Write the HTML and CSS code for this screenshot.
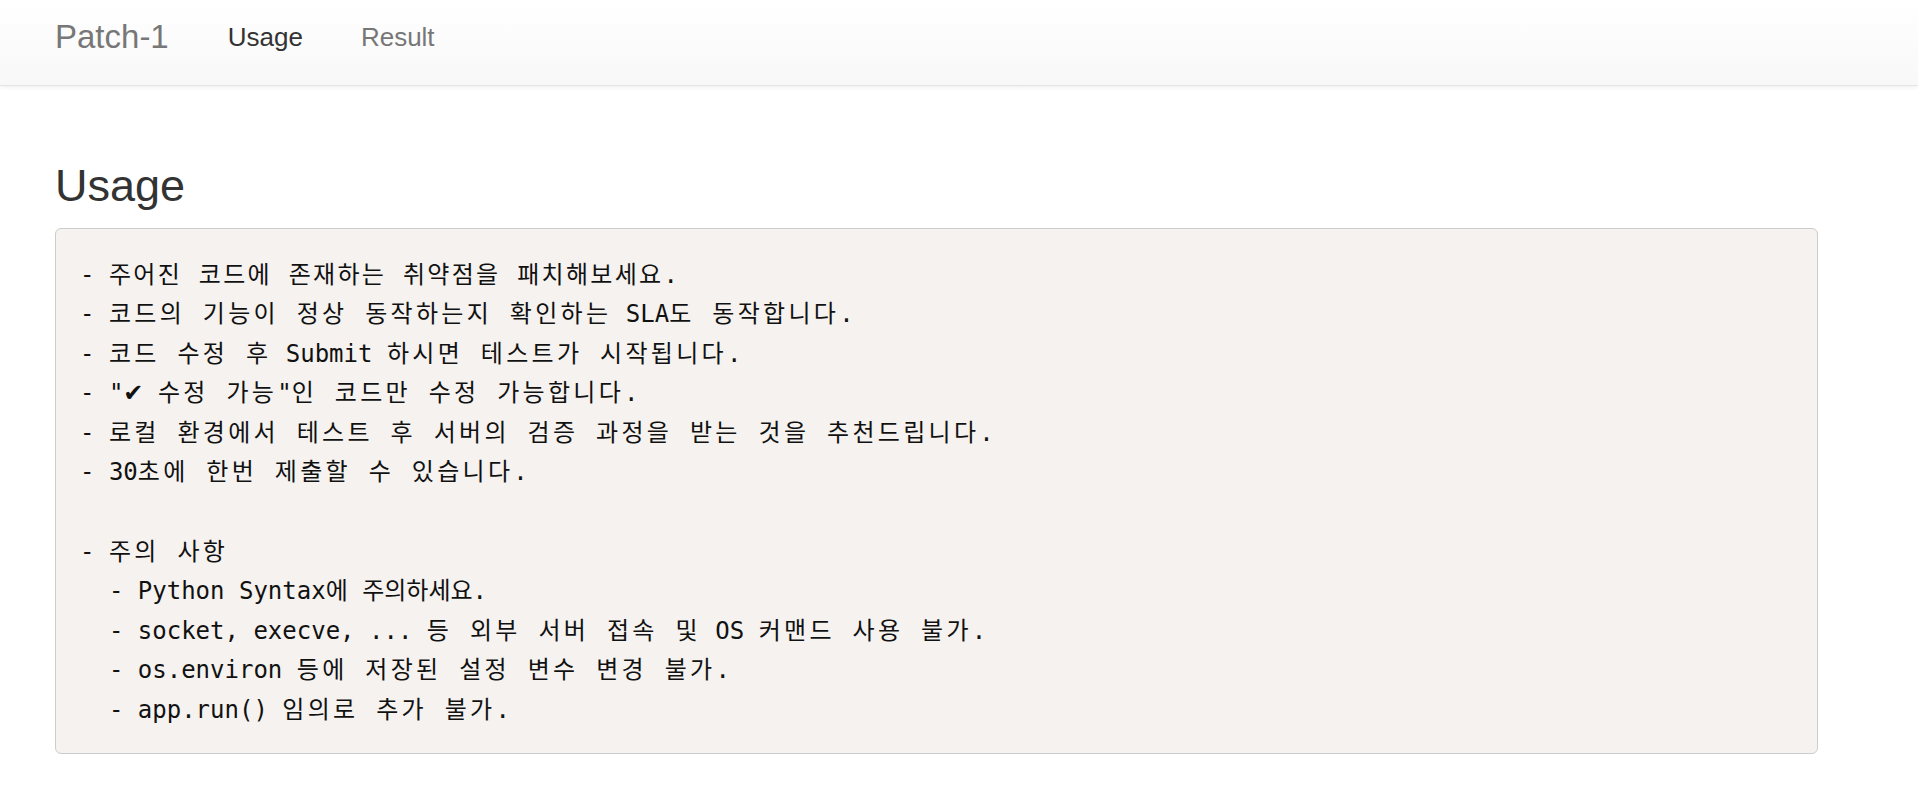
FILE: index.html
```html
<!DOCTYPE html>
<html lang="ko">
<head>
  <meta charset="UTF-8" />
  <meta name="viewport" content="width=device-width, initial-scale=1.0"/>
  <title>Patch-1</title>
  <link rel="stylesheet" href="styles.css">
</head>
<body>

<nav class="navbar">
  <div class="navbar-inner">
    <a class="brand" href="#">Patch-1</a>
    <ul class="nav-links">
      <li><a class="active" href="#">Usage</a></li>
      <li><a href="#">Result</a></li>
    </ul>
  </div>
</nav>

<div class="container">
  <h3 class="page-title">Usage</h3>
  <div class="usage">
    <div class="line">- <span class="ko tight">주어진 코드에 존재하는 취약점을 패치해보세요</span>.</div>
    <div class="line">- <span class="ko">코드의 기능이 정상 동작하는지 확인하는</span> SLA<span class="ko">도 동작합니다</span>.</div>
    <div class="line">- <span class="ko">코드 수정 후</span> Submit <span class="ko">하시면 테스트가 시작됩니다</span>.</div>
    <div class="line">- "<span class="check">✔</span> <span class="ko">수정 가능</span>"<span class="ko">인 코드만 수정 가능합니다</span>.</div>
    <div class="line">- <span class="ko">로컬 환경에서 테스트 후 서버의 검증 과정을 받는 것을 추천드립니다</span>.</div>
    <div class="line">- 30<span class="ko">초에 한번 제출할 수 있습니다</span>.</div>
    <div class="line blank"></div>
    <div class="line">- <span class="ko">주의 사항</span></div>
    <div class="line">  - Python Syntax<span class="ko plain">에 주의하세요</span>.</div>
    <div class="line">  - socket, execve, ... <span class="ko">등 외부 서버 접속 및</span> OS <span class="ko">커맨드 사용 불가</span>.</div>
    <div class="line">  - os.environ <span class="ko">등에 저장된 설정 변수 변경 불가</span>.</div>
    <div class="line">  - app.run() <span class="ko">임의로 추가 불가</span>.</div>
  </div>
</div>

</body>
</html>
```

FILE: styles.css
```css
* {
  box-sizing: border-box;
}
body {
  margin: 0;
  background: #fff;
  color: #333;
  font-family: 'Liberation Sans', Arial, sans-serif;
}
a {
  text-decoration: none;
}
.navbar {
  height: 86px;
  background-image: linear-gradient(to bottom, #ffffff 0%, #f8f8f8 100%);
  border-bottom: 1px solid #e4e4e4;
  box-shadow: 0 1px 5px rgba(0, 0, 0, 0.075);
}
.navbar-inner {
  display: flex;
  align-items: stretch;
  height: 100%;
  padding: 0 55px;
}
.brand {
  display: flex;
  align-items: center;
  padding-right: 30px;
  padding-bottom: 12px;
  font-size: 33px;
  color: #777;
}
.nav-links {
  display: flex;
  margin: 0;
  padding: 0;
  list-style: none;
}
.nav-links a {
  display: flex;
  align-items: center;
  height: 100%;
  padding: 0 29px 10px;
  font-size: 26px;
  color: #777;
}
.nav-links a.active {
  color: #333;
}
.container {
  padding: 0 100px 0 55px;
}
.page-title {
  margin: 75px 0 17px;
  font-size: 45px;
  font-weight: 500;
  line-height: 1.1;
  color: #333;
}
.usage {
  padding: 27px 24px 22px;
  background: #f5f2ef;
  border: 1px solid #cccccc;
  border-radius: 6px;
  font-family: 'DejaVu Sans Mono', 'Noto Sans CJK KR', monospace;
  font-size: 24px;
  line-height: 39.4px;
  color: #111;
}
.line {
  height: 39.6px;
  white-space: pre;
}
.usage .ko {
  letter-spacing: 3.3px;
}
.usage .ko.tight {
  letter-spacing: 2.3px;
}
.usage .ko.plain {
  letter-spacing: 0;
}
.usage .check {
  font-family: 'DejaVu Sans', sans-serif;
  font-weight: bold;
}
```
